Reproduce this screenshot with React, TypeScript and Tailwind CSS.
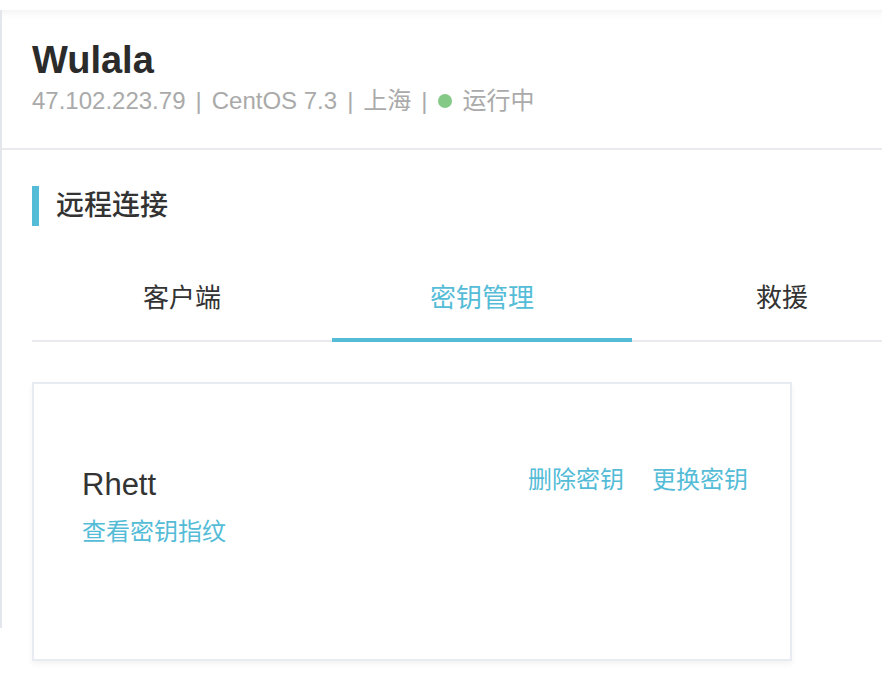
import React from 'react';

const tabs = ['客户端', '密钥管理', '救援'];

const App: React.FC = () => {
  const active = 1;

  return (
    <div className="w-[882px] h-[700px] overflow-hidden bg-white font-['Liberation_Sans','Noto_Sans_CJK_SC',sans-serif]">
      <div className="mt-[10px] h-[618px] border-l-2 border-[#e3e6ea] shadow-[inset_0_10px_10px_-8px_rgba(0,0,0,0.06)]">
        {/* Header */}
        <header className="pl-[30px] pt-[28px] pb-[31px] border-b-2 border-[#e8eaee]">
          <h1 className="text-[38px] leading-[44px] font-bold text-[#2b2b2b]">Wulala</h1>
          <div className="mt-[3px] flex items-center text-[24px] leading-[32px] text-[#aaaaaa] whitespace-nowrap">
            <span>47.102.223.79</span>
            <span className="mx-[10px]">|</span>
            <span>CentOS 7.3</span>
            <span className="mx-[10px]">|</span>
            <span>上海</span>
            <span className="mx-[10px]">|</span>
            <span className="w-[14px] h-[14px] rounded-full bg-[#84c986] mr-[11px]" />
            <span>运行中</span>
          </div>
        </header>

        {/* Main */}
        <main className="pl-[30px]">
          <div className="mt-[36px] flex items-center">
            <span className="w-[7px] h-[40px] bg-[#54bcd7]" />
            <h2 className="ml-[17px] text-[28px] leading-[40px] font-medium text-[#333]">远程连接</h2>
          </div>

          <div className="mt-[30px] flex w-[900px] border-b-2 border-[#e8eaee]">
            {tabs.map((t, i) => (
              <div
                key={t}
                className={
                  i === active
                    ? 'relative w-[300px] h-[84px] flex items-center justify-center text-[26px] text-[#54bcd7]'
                    : 'relative w-[300px] h-[84px] flex items-center justify-center text-[26px] text-[#333]'
                }
              >
                {t}
                {i === active && <span className="absolute left-0 right-0 bottom-[-2px] h-[4px] bg-[#54bcd7]" />}
              </div>
            ))}
          </div>

          <div className="mt-[40px] w-[760px] h-[279px] border-2 border-[#e8ebef] bg-white shadow-[0_3px_5px_rgba(0,0,0,0.05)] pl-[48px] pr-[42px] pt-[83px] flex justify-between items-start">
            <div>
              <div className="text-[31px] leading-[36px] text-[#333]">Rhett</div>
              <div className="mt-[12px] text-[24px] leading-[34px] text-[#54bcd7]">查看密钥指纹</div>
            </div>
            <div className="flex gap-[28px] text-[24px] leading-[34px] text-[#54bcd7] -mt-[4px]">
              <span>删除密钥</span>
              <span>更换密钥</span>
            </div>
          </div>
        </main>
      </div>
    </div>
  );
};

export default App;
